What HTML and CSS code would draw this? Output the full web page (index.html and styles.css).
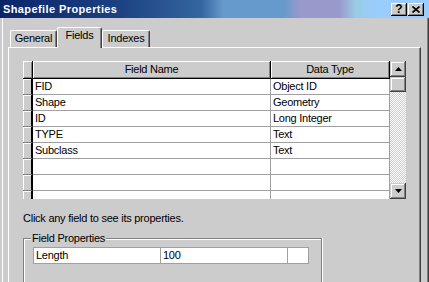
FILE: index.html
```html
<!DOCTYPE html>
<html lang="en">
<head>
  <meta charset="UTF-8" />
  <title>Shapefile Properties</title>
  <link rel="stylesheet" href="styles.css">
</head>
<body>
  <div class="window">
    <div class="titlebar">
      <span class="title">Shapefile Properties</span>
      <div class="cap-btns">
        <div class="cap-btn">?</div>
        <div class="cap-btn">
          <svg width="8" height="7" viewBox="0 0 8 7"><path d="M0.5 0.5 L7.5 6.5 M7.5 0.5 L0.5 6.5" stroke="#000" stroke-width="1.6" fill="none"/></svg>
        </div>
      </div>
    </div>

    <div class="client">
      <div class="tabs">
        <div class="tab tab-general">General</div>
        <div class="tab tab-fields active">Fields</div>
        <div class="tab tab-indexes">Indexes</div>
      </div>

      <div class="panel">
        <div class="grid">
          <div class="table">
            <div class="hd"></div>
            <div class="hd">Field Name</div>
            <div class="hd">Data Type</div>

            <div class="sel"></div><div class="cell">FID</div><div class="cell">Object ID</div>
            <div class="sel"></div><div class="cell">Shape</div><div class="cell">Geometry</div>
            <div class="sel"></div><div class="cell">ID</div><div class="cell">Long Integer</div>
            <div class="sel"></div><div class="cell">TYPE</div><div class="cell">Text</div>
            <div class="sel"></div><div class="cell">Subclass</div><div class="cell">Text</div>
            <div class="sel"></div><div class="cell"></div><div class="cell"></div>
            <div class="sel"></div><div class="cell"></div><div class="cell"></div>
            <div class="sel"></div><div class="cell"></div><div class="cell"></div>
          </div>
          <div class="vscroll">
            <div class="sb-btn">
              <svg width="7" height="4" viewBox="0 0 7 4"><path d="M3.5 0 L7 4 L0 4 Z" fill="#000"/></svg>
            </div>
            <div class="sb-thumb"></div>
            <div class="sb-track"></div>
            <div class="sb-btn">
              <svg width="7" height="4" viewBox="0 0 7 4"><path d="M0 0 L7 0 L3.5 4 Z" fill="#000"/></svg>
            </div>
          </div>
        </div>

        <p class="hint">Click any field to see its properties.</p>

        <div class="group">
          <div class="group-label">Field Properties</div>
          <div class="props">
            <div class="prop">Length</div>
            <div class="prop">100</div>
            <div class="prop"></div>
          </div>
        </div>
      </div>
    </div>
  </div>
</body>
</html>
```

FILE: styles.css
```css
* {
  box-sizing: border-box;
}
body {
  margin: 0;
  width: 429px;
  height: 282px;
  overflow: hidden;
  background: #cccccc;
  font-family: 'Liberation Sans', Arial, sans-serif;
  font-size: 11px;
  letter-spacing: -0.25px;
  color: #000;
}
.window {
  height: 282px;
  display: flex;
  flex-direction: column;
}

/* title bar */
.titlebar {
  height: 18px;
  flex-shrink: 0;
  display: flex;
  padding: 0 5px 0 3px;
  background: linear-gradient(90deg, #0a2468 0%, #1c4282 28%, #35669f 47%, #6699cc 52%, #6699cc 66%, #9999cc 70%, #9999cc 79%, #99cce6 83%, #99ccff 88%, #99ccff 100%);
}
.title {
  flex: 1;
  color: #fff;
  font-weight: bold;
  letter-spacing: 0.4px;
  line-height: 18px;
}
.cap-btns {
  display: flex;
  gap: 1px;
  margin-top: 3px;
}
.cap-btn {
  width: 16px;
  height: 13px;
  background: #cccccc;
  box-shadow: inset -1px -1px #000, inset 1px 1px #fff, inset -2px -2px #808080;
  display: flex;
  align-items: center;
  justify-content: center;
  font-weight: bold;
  font-size: 12px;
  line-height: 13px;
  letter-spacing: 0;
}

/* client area */
.client {
  flex: 1;
  min-height: 0;
  display: flex;
  flex-direction: column;
  padding: 9px 8px 0 8px;
  box-shadow: inset 2px 0 #cccccc, inset 3px 0 #fff, inset -1px 0 #404040, inset -2px 0 #808080;
}
.tabs {
  display: flex;
  flex-shrink: 0;
  align-items: flex-end;
  height: 20px;
  padding-left: 2px;
}
.tab {
  height: 17px;
  border: 1px solid;
  border-color: #fff #404040 transparent #fff;
  border-bottom: 0;
  border-radius: 2px 2px 0 0;
  box-shadow: inset -1px 0 #808080;
  text-align: center;
  line-height: 15px;
}
.tab-general { width: 47px; }
.tab-fields { width: 45px; }
.tab-indexes { width: 48px; }
.tab.active {
  height: 21px;
  margin-bottom: -1px;
  position: relative;
  z-index: 1;
  background: #cccccc;
}
.panel {
  flex: 1;
  min-height: 0;
  overflow: hidden;
  border: 1px solid;
  border-color: #fff #404040 transparent #fff;
  border-bottom: 0;
  box-shadow: inset -1px 0 #808080;
  padding: 13px 0 0 14px;
}

/* fields grid */
.grid {
  display: flex;
  width: 383px;
}
.table {
  width: 367px;
  height: 138px;
  overflow: hidden;
  background: #fff;
  display: grid;
  grid-template-columns: 10px 238px 119px;
  grid-template-rows: 18px;
  grid-auto-rows: 16px;
  align-content: start;
}
.hd {
  background: #cccccc;
  box-shadow: inset 1px 1px #fff, inset -1px -1px #808080;
  border-right: 1px solid #000;
  border-bottom: 1px solid #000;
  text-align: center;
  line-height: 17px;
}
.sel {
  background: #cccccc;
  box-shadow: inset 1px 1px #fff;
  border-right: 2px solid #000;
  border-bottom: 1px solid #808080;
}
.cell {
  border-right: 1px solid #a0a0a0;
  border-bottom: 1px solid #a0a0a0;
  padding-left: 2px;
  line-height: 15px;
  white-space: nowrap;
}
.vscroll {
  width: 16px;
  height: 138px;
  display: flex;
  flex-direction: column;
}
.sb-btn,
.sb-thumb {
  background: #cccccc;
  box-shadow: inset -1px -1px #404040, inset 1px 1px #cccccc, inset -2px -2px #808080, inset 2px 2px #fff;
}
.sb-btn {
  height: 16px;
  display: flex;
  align-items: center;
  justify-content: center;
}
.sb-btn svg {
  display: block;
}
.sb-thumb {
  height: 15px;
}
.sb-track {
  flex: 1;
  background: repeating-conic-gradient(#cccccc 0 25%, #fff 0 50%) 0 0 / 2px 2px;
}

.hint {
  margin: 13px 0 0 0;
  line-height: 13px;
}

/* field properties group */
.group {
  margin-top: 13px;
  width: 299px;
  height: 44px;
  border: 1px solid #808080;
  border-bottom: 0;
  box-shadow: inset 1px 1px #fff, 1px 0 #fff;
  padding-left: 9px;
}
.group-label {
  display: table;
  margin: -7px 0 0 -2px;
  padding: 0 1px;
  background: #cccccc;
  line-height: 13px;
}
.props {
  margin-top: 2px;
  display: grid;
  grid-template-columns: 127px 127px 20px;
  width: 276px;
  height: 17px;
  border: 1px solid #a0a0a0;
  background: #fff;
}
.prop {
  border-right: 1px solid #a0a0a0;
  padding-left: 2px;
  line-height: 15px;
}
.prop:last-child {
  border-right: 0;
}
```
